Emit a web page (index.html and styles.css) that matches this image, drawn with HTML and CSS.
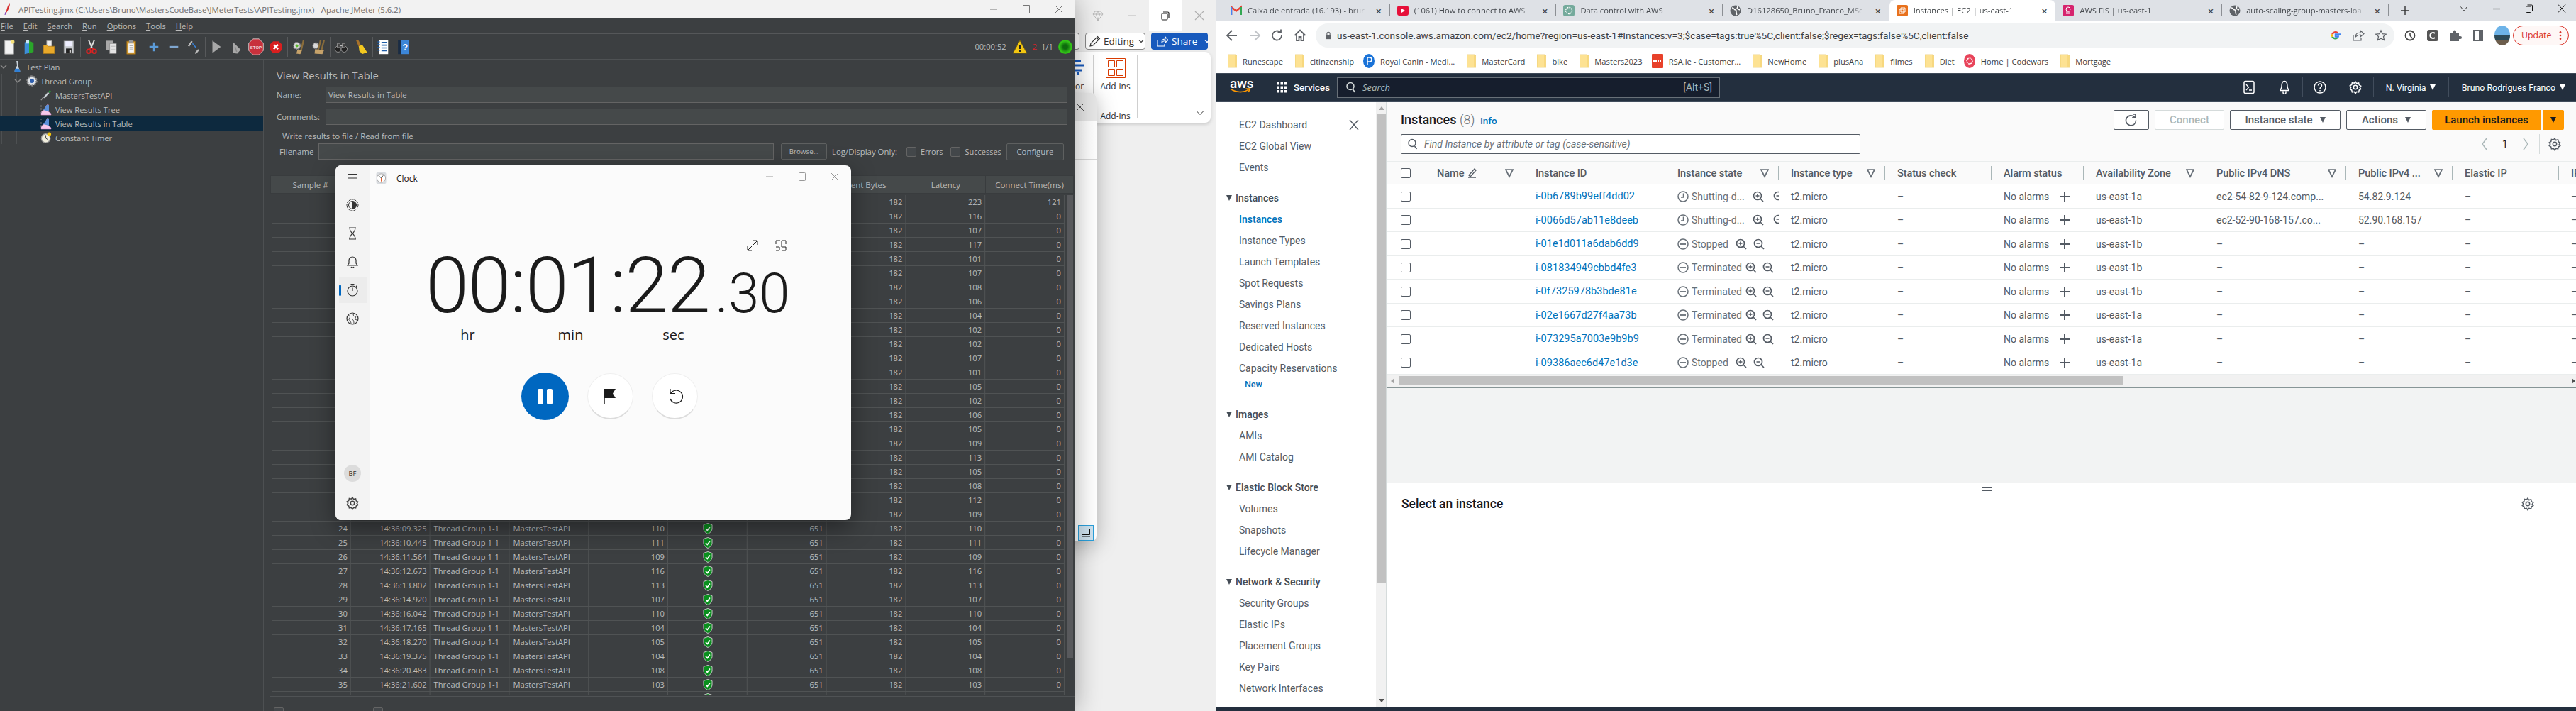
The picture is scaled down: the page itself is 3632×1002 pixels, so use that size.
FILE: index.html
```html
<!doctype html>
<html lang="en">
<head>
<meta charset="utf-8">
<title>Desktop</title>
<link rel="stylesheet" href="styles.css">
</head>
<body>
<svg class="sprite" xmlns="http://www.w3.org/2000/svg">
  <symbol id="shield" viewBox="0 0 14 16"><path d="M7 .5 13 2.500v6c0 3-3 5.500-6 7-3-1.500-6-4-6-7v-6z" fill="#0a8f1e" stroke="#c8c8c8"/><path d="m4 8 2.300 2.500L10 5.500" fill="none" stroke="#fff" stroke-width="1.600"/></symbol>
  <symbol id="folder" viewBox="0 0 13 20"><path d="M0 1h11l2 2v16H0z" fill="#fde293" stroke="#e8c766" stroke-width=".7"/><path d="M11 1v18" stroke="#f2cf6a"/></symbol>
  <symbol id="zin" viewBox="0 0 16 16"><circle cx="7" cy="7" r="5.500" fill="none" stroke="#545b64" stroke-width="1.700"/><path d="m11 11 4 4M4.500 7h5M7 4.500v5" stroke="#545b64" stroke-width="1.700" fill="none"/></symbol>
  <symbol id="zout" viewBox="0 0 16 16"><circle cx="7" cy="7" r="5.500" fill="none" stroke="#545b64" stroke-width="1.700"/><path d="m11 11 4 4M4.500 7h5" stroke="#545b64" stroke-width="1.700" fill="none"/></symbol>
  <symbol id="st-minus" viewBox="0 0 16 16"><circle cx="8" cy="8" r="7" fill="none" stroke="#687078" stroke-width="1.500"/><path d="M4 8h8" stroke="#687078" stroke-width="1.800"/></symbol>
  <symbol id="st-clock" viewBox="0 0 16 16"><circle cx="8" cy="8" r="7" fill="none" stroke="#687078" stroke-width="1.500"/><path d="M8.500 3.500V9H5" stroke="#687078" stroke-width="1.500" fill="none"/></symbol>
  <symbol id="filter" viewBox="0 0 12 14"><path d="M1 2h10L6 12z" fill="#fff" stroke="#687078" stroke-width="1.700"/></symbol>
  <symbol id="plus" viewBox="0 0 16 16"><path d="M8 1v14M1 8h14" stroke="#545b64" stroke-width="2"/></symbol>
  <symbol id="graph" viewBox="0 0 16 18"><path d="M1 17V13L6 9l3-6 2-1v10l4 3v2z" fill="#f8c8ea" stroke="#d68ccc" stroke-width=".5"/><path d="M4 10 9 3h3v9z" fill="#5a8fd8"/><path d="M1 1v16" stroke="#777" stroke-dasharray="1 1"/></symbol>
  <symbol id="gearo" viewBox="0 0 24 24"><circle cx="12" cy="12" r="3.200" fill="none" stroke="currentColor" stroke-width="1.800"/><path d="M12 2.500l2 3 3.500-.8.800 3.500 3 1.800-1.800 2.500 1.800 2.500-3 1.800-.8 3.500-3.500-.8-2 3-2-3-3.500.8-.8-3.500-3-1.800L4.500 12 2.700 9.500l3-1.800.8-3.500 3.500.8z" fill="none" stroke="currentColor" stroke-width="1.800"/></symbol>
</svg>

<main class="desktop">

  <section class="word">
    <div class="word-title">
      <span class="word-cell"><svg class="ic16" viewBox="0 0 16 16"><path d="M4 2h8l3 4-7 9-7-9zM1 6h14M5.500 6 8 15l2.500-9L8 2 5.500 6" fill="none" stroke="#b9b9b9"/></svg></span>
      <span class="word-cell"><svg class="ic16" viewBox="0 0 16 16"><path d="M2 8h12" stroke="#b9b9b9"/></svg></span>
      <span class="word-cell word-cell-on"><svg class="ic16" viewBox="0 0 16 16"><rect x="3" y="5" width="8" height="9" rx="1.500" fill="none" stroke="#222" stroke-width="1.200"/><path d="M5 3h6.500A1.500 1.500 0 0 1 13 4.500V11" fill="none" stroke="#222" stroke-width="1.200"/></svg></span>
      <span class="word-cell"><svg class="ic16" viewBox="0 0 16 16"><path d="m2 2 12 12M14 2 2 14" stroke="#b0b0b0" stroke-width="1.200"/></svg></span>
    </div>
    <div class="word-actions">
      <span class="word-sliver"></span>
      <span class="word-edit"><svg class="ic18" viewBox="0 0 18 18"><path d="M2 16l1-4L12.500 2.500l3 3L6 15zM11 4l3 3" fill="none" stroke="#333" stroke-width="1.100"/></svg>Editing<svg class="ic8" viewBox="0 0 8 8"><path d="m1 2.500 3 3 3-3" fill="none" stroke="#333" stroke-width="1.100"/></svg></span>
      <span class="word-share"><svg class="ic16" viewBox="0 0 16 16"><path d="M1 7v8h10v-3M7 10c0-4 2-5 5-5V2l4 4.500L12 10V7.500c-2 0-3.500.8-5 2.500" fill="none" stroke="#fff" stroke-width="1.100"/></svg>Share<svg class="ic8 word-share-chev" viewBox="0 0 8 8"><path d="m1 2.500 3 3 3-3" fill="none" stroke="#fff" stroke-width="1.300"/></svg></span>
    </div>
    <div class="ribbon">
      <div class="rib-col rib-col-a">
        <svg class="rib-blue" viewBox="0 0 12 24"><path d="M0 4h8M0 10h12M0 17h9M3 20l2 3" fill="none" stroke="#185abd" stroke-width="3"/></svg>
        <span class="rib-or">or</span>
      </div>
      <div class="rib-col rib-col-b">
        <svg class="rib-addin" viewBox="0 0 28 28"><path d="M.5.500h27v27H.5z" fill="none" stroke="#d83b01"/><path d="M3.500 3.500h9v9h-9zM15.500 3.500h9v9h-9zM3.500 15.500h9v9h-9zM15.500 15.500h9v9h-9z" fill="none" stroke="#d83b01"/></svg>
        <span class="rib-label">Add-ins</span>
        <span class="rib-group">Add-ins</span>
      </div>
      <div class="rib-end"><svg class="ic12" viewBox="0 0 12 12"><path d="m1 3.500 5 5 5-5" fill="none" stroke="#333"/></svg></div>
    </div>
  </section>

  <section class="subwin">
    <div class="subwin-title"><svg class="ic12" viewBox="0 0 12 12"><path d="m1 1 10 10M11 1 1 11" stroke="#555"/></svg></div>
    <div class="subwin-body"></div>
    <div class="subwin-grid"></div>
    <div class="subwin-tick"><svg class="ic12" viewBox="0 0 12 12"><path d="M.5.500h11v8H.5zM0 11h12" fill="none" stroke="#111"/></svg></div>
  </section>

  <section class="jmeter">
    <header class="jm-title">
      <svg class="jm-feather" viewBox="0 0 10 18"><path d="M8 0C5 3 4 7 3 11L2 13 3 14C6 10 8 5 8 0z" fill="#d62b2b"/><path d="M2 13 1 17" stroke="#7a2fb0"/></svg>
      <span class="jm-title-text">APITesting.jmx (C:\Users\Bruno\MastersCodeBase\JMeterTests\APITesting.jmx) - Apache JMeter (5.6.2)</span>
      <span class="jm-win"><svg class="ic12" viewBox="0 0 12 12"><path d="M1 6h10" stroke="#777"/></svg><svg class="ic12" viewBox="0 0 12 12"><path d="M1.500.5h9v11h-9z" fill="none" stroke="#777"/></svg><svg class="ic12" viewBox="0 0 12 12"><path d="m1 1 10 10M11 1 1 11" stroke="#777"/></svg></span>
    </header>
    <nav class="jm-menu">
      <span><u>F</u>ile</span><span><u>E</u>dit</span><span><u>S</u>earch</span><span><u>R</u>un</span><span><u>O</u>ptions</span><span><u>T</u>ools</span><span><u>H</u>elp</span>
    </nav>
    <div class="jm-tools">
      <svg class="tb" viewBox="0 0 24 28"><path d="M4 3h13l3 3v21H4z" fill="#f2f2f2" stroke="#aaa"/><circle cx="18" cy="5" r="3.500" fill="#f6e27a"/></svg>
      <svg class="tb" viewBox="0 0 24 28"><path d="M4 6 12 3v22l-8 2z" fill="#3d8fd8"/><path d="M12 3l8 4v16l-8 3z" fill="#2aa52a"/><path d="M6 2h6v6H6z" fill="#c9e4f5"/></svg>
      <svg class="tb" viewBox="0 0 24 28"><path d="M8 3h9v12H8z" fill="#eee" stroke="#999"/><path d="M2 11h7l2 2h11v13H2z" fill="#e8a92a" stroke="#a8761a"/></svg>
      <svg class="tb" viewBox="0 0 24 28"><path d="M3 3h18v23H3z" fill="#c8ccd0" stroke="#555"/><path d="M6 4h12v9H6z" fill="#eef"/><path d="M7 17h10v9H7z" fill="#222"/><path d="M13 19h3v5h-3z" fill="#ccc"/></svg>
      <i class="tb-sep"></i>
      <svg class="tb" viewBox="0 0 24 28"><path d="M7 2l6 14M17 2l-6 14" stroke="#ddd" stroke-width="2.500"/><circle cx="7" cy="22" r="3.500" fill="none" stroke="#d22" stroke-width="2.500"/><circle cx="17" cy="22" r="3.500" fill="none" stroke="#d22" stroke-width="2.500"/><path d="M11 16l-3 3M13 16l3 3" stroke="#d22" stroke-width="2"/></svg>
      <svg class="tb" viewBox="0 0 24 28"><path d="M3 3h12v17H3z" fill="#a8a8a8"/><path d="M9 8h12v18H9z" fill="#e4e4e4" stroke="#888"/><path d="M11 13h8M11 16h8M11 19h8" stroke="#aaa"/></svg>
      <svg class="tb" viewBox="0 0 24 28"><path d="M4 4h16v23H4z" fill="#d59b32" stroke="#8f6418"/><path d="M7 8h10v16H7z" fill="#f5f5f5"/><path d="M8 2h8v5H8z" fill="#999"/><path d="M9 12h6M9 15h6M9 18h6" stroke="#999"/></svg>
      <i class="tb-sep"></i>
      <svg class="tb" viewBox="0 0 24 28"><path d="M12 6v16M4 14h16" stroke="#5b9bd8" stroke-width="3"/></svg>
      <svg class="tb" viewBox="0 0 24 28"><path d="M4 14h16" stroke="#7fa6cf" stroke-width="3"/></svg>
      <svg class="tb" viewBox="0 0 24 28"><path d="M3 13 9 4M15 26l6-7" stroke="#bbb" stroke-width="3"/><path d="M10 8l6 7" stroke="#3a7fd0" stroke-width="2"/><path d="m14 15 3 1-1-3z" fill="#3a7fd0"/></svg>
      <i class="tb-sep"></i>
      <svg class="tb" viewBox="0 0 24 28"><path d="M5 3l15 11L5 25z" fill="#a8a8a8"/></svg>
      <svg class="tb" viewBox="0 0 24 28"><path d="M6 5l14 14-6 7-8-1z" fill="#a8a8a8"/><path d="M10 14l3 9" stroke="#8a8a8a" stroke-width="2"/></svg>
      <svg class="tb tb-stop" viewBox="0 0 26 28"><path d="M8 1h10l7 7v12l-7 7H8l-7-7V8z" fill="#c8313c" stroke="#d8d8d8"/><text x="13" y="17" class="tb-stop-t">STOP</text></svg>
      <svg class="tb" viewBox="0 0 24 28"><path d="M7 4h10l6 6v9l-6 6H7l-6-6v-9z" fill="#d91f1f"/><path d="m8 10 8 8M16 10l-8 8" stroke="#fff" stroke-width="3"/></svg>
      <i class="tb-sep"></i>
      <svg class="tb" viewBox="0 0 24 28"><circle cx="9" cy="12" r="6" fill="#d8d8d8" stroke="#888" stroke-dasharray="2 1" stroke-width="2"/><circle cx="9" cy="12" r="2.500" fill="#5cb82e"/><path d="M21 2 15 26" stroke="#8a6d3b" stroke-width="3"/><path d="M10 19l8 1-3 7-7-1z" fill="#c6a26a"/></svg>
      <svg class="tb" viewBox="0 0 24 28"><circle cx="7" cy="12" r="5" fill="#d8d8d8" stroke="#888" stroke-dasharray="2 1" stroke-width="2"/><path d="M16 2 10 26M22 2l-6 24" stroke="#8a6d3b" stroke-width="3"/><path d="M6 18l16 2-3 7-14-1z" fill="#c6a26a"/></svg>
      <i class="tb-sep"></i>
      <svg class="tb" viewBox="0 0 24 28"><circle cx="6.500" cy="18" r="5.500" fill="#222" stroke="#aaa"/><circle cx="17.500" cy="18" r="5.500" fill="#222" stroke="#aaa"/><path d="M5 8h5v7H5zM14 8h5v7h-5z" fill="#444" stroke="#999"/><path d="M10 12h4" stroke="#bbb" stroke-width="2"/></svg>
      <svg class="tb" viewBox="0 0 24 28"><path d="M3 2l5 1 4 9-4 2z" fill="#a8722a"/><path d="M8 13l6-3 9 14-9 3-5-6z" fill="#f2c81f"/></svg>
      <i class="tb-sep"></i>
      <svg class="tb" viewBox="0 0 24 28"><path d="M4 2h16v25H4z" fill="#fff"/><path d="M1 5h4M1 10h4M1 15h4M1 20h4M8 6h10M8 11h10M8 16h10M8 21h10" stroke="#1f5ea8" stroke-width="2"/></svg>
      <svg class="tb" viewBox="0 0 24 28"><path d="M2 2h7v25H2z" fill="#1a2c44"/><path d="M8 2h14v25H8z" fill="#3c86d8"/><text x="15" y="20" class="tb-q">?</text></svg>
      <span class="jm-stat">
        <span>00:00:52</span>
        <svg class="tb-warn" viewBox="0 0 22 20"><path d="M11 1 21 19H1z" fill="#f3c611" stroke="#6d5c12"/><path d="M11 7v6M11 15v2" stroke="#222" stroke-width="2"/></svg>
        <span class="jm-red">2</span>
        <span>1/1</span>
        <span class="jm-orb"></span>
      </span>
    </div>
    <div class="jm-body">
      <aside class="jm-tree">
        <div class="tr tr-0"><svg class="tw" viewBox="0 0 10 10"><path d="m1 3 4 4 4-4" fill="none" stroke="#888" stroke-width="1.500"/></svg><svg class="ti" viewBox="0 0 14 20"><path d="M5.500 1h2v7l4 9c0 1.500-9 1.500-9 0l4-9z" fill="#cfd8e0"/><path d="M3.500 13h6l2 4c0 1.500-9 1.500-9 0z" fill="#2f7fd6"/></svg>Test Plan</div>
        <div class="tr tr-1"><svg class="tw" viewBox="0 0 10 10"><path d="m1 3 4 4 4-4" fill="none" stroke="#888" stroke-width="1.500"/></svg><svg class="ti ti-w" viewBox="0 0 18 18"><circle cx="9" cy="9" r="6.500" fill="#dfe3e8" stroke="#888" stroke-width="2.500" stroke-dasharray="2.500 1.500"/><circle cx="9" cy="9" r="3" fill="#2f5fae"/></svg>Thread Group</div>
        <div class="tr tr-2"><svg class="ti" viewBox="0 0 18 18"><path d="M15 1l2 2-3 3-2-2z" fill="#2b8a3e"/><path d="M12 4l2 2-7 8-3-1z" fill="#cfd6dc" stroke="#555" stroke-width=".6"/><path d="M4 13 1 17" stroke="#999" stroke-width="1.500"/></svg>MastersTestAPI</div>
        <div class="tr tr-2"><svg class="ti" viewBox="0 0 16 18"><use href="#graph"/></svg>View Results Tree</div>
        <div class="tr tr-2 tr-on"><svg class="ti" viewBox="0 0 16 18"><use href="#graph"/></svg>View Results in Table</div>
        <div class="tr tr-2"><svg class="ti" viewBox="0 0 18 18"><circle cx="8.500" cy="10" r="7" fill="#f1efdd" stroke="#999" stroke-width="1.500"/><path d="M8.500 10V5M8.500 10l3 2" stroke="#333"/><circle cx="14" cy="3.500" r="3" fill="#f1c40f"/></svg>Constant Timer</div>
      </aside>
      <div class="jm-panel">
        <form class="jm-form">
          <h2 class="jm-h">View Results in Table</h2>
          <div class="jm-field"><label class="jm-lab">Name:</label><span class="jm-input">View Results in Table</span></div>
          <div class="jm-field jm-field-c"><label class="jm-lab">Comments:</label><span class="jm-input"></span></div>
          <div class="jm-legend"><span>Write results to file / Read from file</span></div>
          <div class="jm-file">
            <label class="jm-flab">Filename</label>
            <span class="jm-input jm-input-f"></span>
            <span class="jm-btn jm-btn-s">Browse...</span>
            <span class="jm-ld">Log/Display Only:</span>
            <span class="jm-chk"></span><span class="jm-cl">Errors</span>
            <span class="jm-chk"></span><span class="jm-cl">Successes</span>
            <span class="jm-btn jm-btn-c">Configure</span>
          </div>
        </form>
        <div class="jt-head"><span>Sample #</span><span>Start Time</span><span>Thread Name</span><span>Sample Label</span><span>Sample Time(ms)</span><span>Status</span><span>Bytes</span><span>Sent Bytes</span><span>Latency</span><span>Connect Time(ms)</span></div>
        <div class="jt-wrap">
          <div class="jt-rows">
            <div class="jr"><b class="c8">182</b><b>223</b><b>121</b></div>
            <div class="jr"><b class="c8">182</b><b>116</b><b>0</b></div>
            <div class="jr"><b class="c8">182</b><b>107</b><b>0</b></div>
            <div class="jr"><b class="c8">182</b><b>117</b><b>0</b></div>
            <div class="jr"><b class="c8">182</b><b>101</b><b>0</b></div>
            <div class="jr"><b class="c8">182</b><b>107</b><b>0</b></div>
            <div class="jr"><b class="c8">182</b><b>108</b><b>0</b></div>
            <div class="jr"><b class="c8">182</b><b>106</b><b>0</b></div>
            <div class="jr"><b class="c8">182</b><b>104</b><b>0</b></div>
            <div class="jr"><b class="c8">182</b><b>102</b><b>0</b></div>
            <div class="jr"><b class="c8">182</b><b>102</b><b>0</b></div>
            <div class="jr"><b class="c8">182</b><b>107</b><b>0</b></div>
            <div class="jr"><b class="c8">182</b><b>101</b><b>0</b></div>
            <div class="jr"><b class="c8">182</b><b>105</b><b>0</b></div>
            <div class="jr"><b class="c8">182</b><b>102</b><b>0</b></div>
            <div class="jr"><b class="c8">182</b><b>106</b><b>0</b></div>
            <div class="jr"><b class="c8">182</b><b>105</b><b>0</b></div>
            <div class="jr"><b class="c8">182</b><b>109</b><b>0</b></div>
            <div class="jr"><b class="c8">182</b><b>113</b><b>0</b></div>
            <div class="jr"><b class="c8">182</b><b>105</b><b>0</b></div>
            <div class="jr"><b class="c8">182</b><b>108</b><b>0</b></div>
            <div class="jr"><b class="c8">182</b><b>112</b><b>0</b></div>
            <div class="jr"><b class="c8">182</b><b>109</b><b>0</b></div>
            <div class="jr"><b>24</b><b>14:36:09.325</b><em>Thread Group 1-1</em><em>MastersTestAPI</em><b>110</b><s><svg class="sh"><use href="#shield"/></svg></s><b>651</b><b>182</b><b>110</b><b>0</b></div>
            <div class="jr"><b>25</b><b>14:36:10.445</b><em>Thread Group 1-1</em><em>MastersTestAPI</em><b>111</b><s><svg class="sh"><use href="#shield"/></svg></s><b>651</b><b>182</b><b>111</b><b>0</b></div>
            <div class="jr"><b>26</b><b>14:36:11.564</b><em>Thread Group 1-1</em><em>MastersTestAPI</em><b>109</b><s><svg class="sh"><use href="#shield"/></svg></s><b>651</b><b>182</b><b>109</b><b>0</b></div>
            <div class="jr"><b>27</b><b>14:36:12.673</b><em>Thread Group 1-1</em><em>MastersTestAPI</em><b>116</b><s><svg class="sh"><use href="#shield"/></svg></s><b>651</b><b>182</b><b>116</b><b>0</b></div>
            <div class="jr"><b>28</b><b>14:36:13.802</b><em>Thread Group 1-1</em><em>MastersTestAPI</em><b>113</b><s><svg class="sh"><use href="#shield"/></svg></s><b>651</b><b>182</b><b>113</b><b>0</b></div>
            <div class="jr"><b>29</b><b>14:36:14.920</b><em>Thread Group 1-1</em><em>MastersTestAPI</em><b>107</b><s><svg class="sh"><use href="#shield"/></svg></s><b>651</b><b>182</b><b>107</b><b>0</b></div>
            <div class="jr"><b>30</b><b>14:36:16.042</b><em>Thread Group 1-1</em><em>MastersTestAPI</em><b>110</b><s><svg class="sh"><use href="#shield"/></svg></s><b>651</b><b>182</b><b>110</b><b>0</b></div>
            <div class="jr"><b>31</b><b>14:36:17.165</b><em>Thread Group 1-1</em><em>MastersTestAPI</em><b>104</b><s><svg class="sh"><use href="#shield"/></svg></s><b>651</b><b>182</b><b>104</b><b>0</b></div>
            <div class="jr"><b>32</b><b>14:36:18.270</b><em>Thread Group 1-1</em><em>MastersTestAPI</em><b>105</b><s><svg class="sh"><use href="#shield"/></svg></s><b>651</b><b>182</b><b>105</b><b>0</b></div>
            <div class="jr"><b>33</b><b>14:36:19.375</b><em>Thread Group 1-1</em><em>MastersTestAPI</em><b>104</b><s><svg class="sh"><use href="#shield"/></svg></s><b>651</b><b>182</b><b>104</b><b>0</b></div>
            <div class="jr"><b>34</b><b>14:36:20.483</b><em>Thread Group 1-1</em><em>MastersTestAPI</em><b>108</b><s><svg class="sh"><use href="#shield"/></svg></s><b>651</b><b>182</b><b>108</b><b>0</b></div>
            <div class="jr"><b>35</b><b>14:36:21.602</b><em>Thread Group 1-1</em><em>MastersTestAPI</em><b>103</b><s><svg class="sh"><use href="#shield"/></svg></s><b>651</b><b>182</b><b>103</b><b>0</b></div>
            <div class="jr"><s class="c6"><svg class="sh"><use href="#shield"/></svg></s></div>
          </div>
          <div class="jt-scroll"></div>
        </div>
        <div class="jm-foot">
          <span class="jm-chk"></span><span class="jf-a">Scroll automatically?</span>
          <span class="jm-chk"></span><span class="jf-b">Child samples?</span>
          <span class="jf-c">No of Samples <b>30</b></span>
          <span class="jf-d">Latest Sample <b>107</b></span>
          <span class="jf-e">Average <b>110</b></span>
          <span class="jf-f">Deviation <b>40</b></span>
        </div>
      </div>
    </div>
  </section>

  <section class="clock">
    <aside class="ck-side">
      <span class="ck-nav ck-nav-first"><svg class="ic20" viewBox="0 0 20 20"><path d="M3 4.500h14M3 10h14M3 15.500h14" stroke="#333" stroke-width="1.200"/></svg></span>
      <span class="ck-nav"><svg class="ic20" viewBox="0 0 20 20"><circle cx="10" cy="10" r="8" fill="none" stroke="#333" stroke-dasharray="3 1"/><circle cx="10" cy="10" r="5.500" fill="none" stroke="#333"/><path d="M10 4.500a5.500 5.500 0 0 1 0 11z" fill="#333"/></svg></span>
      <span class="ck-nav"><svg class="ic20" viewBox="0 0 20 20"><path d="M5 2h10M5 18h10M6 2c0 5 3 6 3.500 8C9 12 6 13 6 18M14 2c0 5-3 6-3.500 8 .5 2 3.500 3 3.500 8" fill="none" stroke="#333" stroke-width="1.200"/></svg></span>
      <span class="ck-nav"><svg class="ic20" viewBox="0 0 20 20"><path d="M3 15h14l-2-3V8A5 5 0 0 0 5 8v4zM8 17c.5 1.500 3.500 1.500 4 0" fill="none" stroke="#333" stroke-width="1.200"/></svg></span>
      <span class="ck-nav ck-nav-on"><svg class="ic20" viewBox="0 0 20 20"><circle cx="10" cy="11" r="7" fill="none" stroke="#333" stroke-width="1.200"/><path d="M7.500 1.500h5M10 11V6.500M15 5l1.500-1.500" stroke="#333" stroke-width="1.200"/></svg></span>
      <span class="ck-nav"><svg class="ic20" viewBox="0 0 20 20"><circle cx="10" cy="10" r="8" fill="none" stroke="#333" stroke-width="1.200"/><path d="M4 5c3 1 3 4 1 5s3 3 3 7M12 2c-2 3 0 5 2 5s-1 3 0 4 2 1 3 0M9 11c2 0 3 2 3 6" fill="none" stroke="#333"/></svg></span>
      <span class="ck-user">BF</span>
      <span class="ck-gear"><svg class="ic20" viewBox="0 0 24 24"><use href="#gearo"/></svg></span>
    </aside>
    <div class="ck-main">
      <div class="ck-title">
        <svg class="ck-logo" viewBox="0 0 16 18"><rect x=".5" y=".5" width="15" height="17" rx="2" fill="#d9dce0"/><circle cx="8" cy="9" r="6.500" fill="#fff" stroke="#aaa"/><path d="M8 9 4 5M8 9l3-4" stroke="#444"/><path d="M8 9v5" stroke="#e2531d"/></svg>
        <span class="ck-name">Clock</span>
        <span class="ck-win">
          <span><svg class="ic12" viewBox="0 0 12 12"><path d="M1 6h10" stroke="#999"/></svg></span>
          <span><svg class="ic12" viewBox="0 0 12 12"><rect x="1.500" y=".5" width="9" height="11" rx="1" fill="none" stroke="#999"/></svg></span>
          <span><svg class="ic12" viewBox="0 0 12 12"><path d="m1 1 10 10M11 1 1 11" stroke="#999"/></svg></span>
        </span>
      </div>
      <div class="ck-expand">
        <svg class="ic20" viewBox="0 0 20 20"><path d="M3 17 17 3M11 3h6v6M3 11v6h6" fill="none" stroke="#222"/></svg>
        <svg class="ic20" viewBox="0 0 20 20"><path d="M3 8V3h6M17 8V3H11v9h6v5h-6M3 17h5v-5H3" fill="none" stroke="#222"/></svg>
      </div>
      <div class="ck-time">00:01:22<span class="ck-frac">.30</span></div>
      <div class="ck-units"><span>hr</span><span>min</span><span>sec</span></div>
      <div class="ck-btns">
        <span class="ck-pause"><i></i><i></i></span>
        <span class="ck-round"><svg class="ic24" viewBox="0 0 24 24"><path d="M3 2v21" stroke="#1b1b1b" stroke-width="1.500"/><path d="M3 2h16l-4 6.500L19 15H3z" fill="#1b1b1b"/></svg></span>
        <span class="ck-round ck-round-2"><svg class="ic24" viewBox="0 0 24 24"><path d="M6 8a9 9 0 1 1-1 8M5 2v6.500h7" fill="none" stroke="#1b1b1b" stroke-width="1.200"/></svg></span>
      </div>
    </div>
  </section>

  <section class="browser">
    <div class="ch-tabs">
      <div class="tab"><svg class="fav" viewBox="0 0 16 16"><path d="M1 14V3l7 5.500L15 3v11" fill="none" stroke="#ea4335" stroke-width="2.500"/><path d="M1 14V3" stroke="#4285f4" stroke-width="2.500"/><path d="M15 14V3" stroke="#34a853" stroke-width="2.500"/></svg><span class="tab-t">Caixa de entrada (16.193) - brur</span><span class="tab-x">×</span></div>
      <div class="tab"><svg class="fav" viewBox="0 0 16 16"><rect y="1" width="16" height="14" rx="3" fill="#e6103a"/><path d="m6 5 5 3-5 3z" fill="#fff"/></svg><span class="tab-t">(1061) How to connect to AWS</span><span class="tab-x">×</span></div>
      <div class="tab"><svg class="fav" viewBox="0 0 16 16"><rect width="16" height="16" rx="3" fill="#74aa9c"/><circle cx="8" cy="8" r="4.500" fill="none" stroke="#fff" stroke-dasharray="2 1" stroke-width="1.500"/></svg><span class="tab-t">Data control with AWS</span><span class="tab-x">×</span></div>
      <div class="tab"><svg class="fav" viewBox="0 0 16 16"><circle cx="8" cy="8" r="7.500" fill="#5f6368"/><path d="M3 4c3 0 3 3 5 3s0 4 2 7M11 2l-1 3 4 2" fill="none" stroke="#fff" stroke-width="1.500"/></svg><span class="tab-t">D16128650_Bruno_Franco_MSc</span><span class="tab-x">×</span></div>
      <div class="tab tab-on"><svg class="fav" viewBox="0 0 16 16"><rect width="16" height="16" rx="2" fill="#e8711d"/><path d="M6 4h6v6H6zM4 6h6v6H4z" fill="none" stroke="#fff"/></svg><span class="tab-t">Instances | EC2 | us-east-1</span><span class="tab-x">×</span></div>
      <div class="tab"><svg class="fav" viewBox="0 0 16 16"><rect width="16" height="16" rx="2" fill="#d6246e"/><circle cx="8" cy="6" r="3" fill="none" stroke="#fff"/><path d="M6 9v4M10 9v4M8 9v4" stroke="#fff"/></svg><span class="tab-t">AWS FIS | us-east-1</span><span class="tab-x">×</span></div>
      <div class="tab"><svg class="fav" viewBox="0 0 16 16"><circle cx="8" cy="8" r="7.500" fill="#5f6368"/><path d="M3 4c3 0 3 3 5 3s0 4 2 7M11 2l-1 3 4 2" fill="none" stroke="#fff" stroke-width="1.500"/></svg><span class="tab-t">auto-scaling-group-masters-loa</span><span class="tab-x">×</span></div>
      <span class="tab-new"><svg class="ic14" viewBox="0 0 14 14"><path d="M7 1v12M1 7h12" stroke="#333" stroke-width="1.400"/></svg></span>
      <span class="ch-win">
        <svg class="ic12" viewBox="0 0 12 12"><path d="m1.500 3.500 4.500 6 4.500-6" fill="none" stroke="#333"/></svg>
        <svg class="ic12" viewBox="0 0 12 12"><path d="M1 6.500h10" stroke="#111" stroke-width="1.200"/></svg>
        <svg class="ic12" viewBox="0 0 12 12"><rect x="1.500" y="3" width="7" height="8.500" rx="1" fill="none" stroke="#111"/><path d="M3.500 1h6a1 1 0 0 1 1 1v7" fill="none" stroke="#111"/></svg>
        <svg class="ic12" viewBox="0 0 12 12"><path d="m1 .5 10 11M11 .5 1 11.500" stroke="#111"/></svg>
      </span>
    </div>
    <div class="ch-bar">
      <svg class="ic20" viewBox="0 0 20 20"><path d="M17 10H4M10 3l-7 7 7 7" fill="none" stroke="#5f6368" stroke-width="1.800"/></svg>
      <svg class="ic20 ch-dim" viewBox="0 0 20 20"><path d="M3 10h13M10 3l7 7-7 7" fill="none" stroke="#c0c3c7" stroke-width="1.800"/></svg>
      <svg class="ic20" viewBox="0 0 20 20"><path d="M16 10a6.500 6.500 0 1 1-2-4.700M15 1.500V6h-4.500" fill="none" stroke="#5f6368" stroke-width="1.800"/></svg>
      <svg class="ic20" viewBox="0 0 20 20"><path d="M2.500 10 10 2.500l7.500 7.500M5 8v9h3.500v-5h3v5H15V8" fill="none" stroke="#5f6368" stroke-width="1.800"/></svg>
      <div class="ch-omni">
        <svg class="ic12" viewBox="0 0 12 14"><path d="M2 6h8v7H2z" fill="#5f6368"/><path d="M3.500 6V4a2.500 2.500 0 0 1 5 0v2" fill="none" stroke="#5f6368" stroke-width="1.300"/></svg>
        <span class="ch-url">us-east-1.console.aws.amazon.com/ec2/home?region=us-east-1#Instances:v=3;$case=tags:true%5C,client:false;$regex=tags:false%5C,client:false</span>
        <span class="ch-omni-r">
          <svg class="ic18" viewBox="0 0 18 18"><path d="M15.500 9c0-.5 0-1-.1-1.500H9v3h3.700a3.200 3.200 0 0 1-1.400 2" fill="none" stroke="#4285f4" stroke-width="2.400"/><path d="M11.300 12.500A5 5 0 0 1 4.300 10.700" fill="none" stroke="#34a853" stroke-width="2.400"/><path d="M4.300 10.700a5 5 0 0 1 0-3.400" fill="none" stroke="#fbbc05" stroke-width="2.400"/><path d="M4.300 7.300a5 5 0 0 1 7.500-2" fill="none" stroke="#ea4335" stroke-width="2.400"/></svg>
          <svg class="ic18" viewBox="0 0 18 18"><path d="M2 9v7h11v-3M5 11c0-4 3-6 7-6V2l5 4.500L12 11V8c-3 0-5 1-7 3z" fill="none" stroke="#5f6368" stroke-width="1.200"/></svg>
          <svg class="ic18" viewBox="0 0 18 18"><path d="m9 2 2.200 4.600 5 .6-3.700 3.400 1 5L9 13.200 4.500 15.600l1-5L1.800 7.200l5-.6z" fill="none" stroke="#5f6368" stroke-width="1.300"/></svg>
        </span>
      </div>
      <span class="ch-exts">
        <svg class="ic18" viewBox="0 0 18 18"><circle cx="9" cy="9" r="6.500" fill="none" stroke="#444" stroke-width="1.800"/><path d="M9 5v4l3 4" stroke="#444" stroke-width="1.600" fill="none"/></svg>
        <svg class="ic18" viewBox="0 0 18 18"><rect x="1" y="1" width="16" height="16" rx="3" fill="#555"/><path d="M12 6a4 4 0 1 0 0 6" fill="none" stroke="#fff" stroke-width="2"/></svg>
        <svg class="ic18" viewBox="0 0 18 18"><path d="M2 6h4V3.500a2 2 0 0 1 4 0V6h4v4h2a2 2 0 0 1 0 4h-2v3H2z" fill="#5f6368"/></svg>
        <svg class="ic18" viewBox="0 0 18 18"><path d="M3 2h12v14H3z" fill="none" stroke="#5f6368" stroke-width="2"/><path d="M10 2h5v14h-5z" fill="#5f6368"/></svg>
        <span class="ch-avatar"></span>
        <span class="ch-update">Update<svg class="ch-dots" viewBox="0 0 4 18"><circle cx="2" cy="3" r="1.700"/><circle cx="2" cy="9" r="1.700"/><circle cx="2" cy="15" r="1.700"/></svg></span>
      </span>
    </div>
    <div class="ch-book">
      <a class="bk"><svg class="bk-f"><use href="#folder"/></svg>Runescape</a>
      <a class="bk"><svg class="bk-f"><use href="#folder"/></svg>citinzenship</a>
      <a class="bk"><svg class="bk-i" viewBox="0 0 16 20"><ellipse cx="8" cy="10" rx="8" ry="10" fill="#1a73d8"/><path d="M6 5v11M6 5h3a3 3 0 0 1 0 6H6" fill="none" stroke="#fff" stroke-width="1.500"/></svg>Royal Canin - Medi...</a>
      <a class="bk"><svg class="bk-f"><use href="#folder"/></svg>MasterCard</a>
      <a class="bk"><svg class="bk-f"><use href="#folder"/></svg>bike</a>
      <a class="bk"><svg class="bk-f"><use href="#folder"/></svg>Masters2023</a>
      <a class="bk"><svg class="bk-i" viewBox="0 0 16 20"><rect width="16" height="20" rx="1" fill="#e8412a"/><path d="M2 10h12" stroke="#fff" stroke-width="3" stroke-dasharray="2 1"/></svg>RSA.ie - Customer...</a>
      <a class="bk"><svg class="bk-f"><use href="#folder"/></svg>NewHome</a>
      <a class="bk"><svg class="bk-f"><use href="#folder"/></svg>plusAna</a>
      <a class="bk"><svg class="bk-f"><use href="#folder"/></svg>filmes</a>
      <a class="bk"><svg class="bk-f"><use href="#folder"/></svg>Diet</a>
      <a class="bk"><svg class="bk-i" viewBox="0 0 16 20"><ellipse cx="8" cy="10" rx="8" ry="10" fill="#e8445a"/><circle cx="8" cy="10" r="4" fill="none" stroke="#fff" stroke-width="1.500" stroke-dasharray="2 1"/></svg>Home | Codewars</a>
      <a class="bk"><svg class="bk-f"><use href="#folder"/></svg>Mortgage</a>
    </div>
    <div class="aws-nav">
      <span class="aws-logo">aws<svg class="aws-smile" viewBox="0 0 32 8"><path d="M1 1c8 6 20 6 27 1M24 1h6l-2 5" fill="none" stroke="#ff9900" stroke-width="1.800"/></svg></span>
      <svg class="aws-grid" viewBox="0 0 15 15"><path d="M0 0h3.500v3.500H0zM5.500 0H9v3.500H5.500zM11 0h3.500v3.500H11zM0 5.500h3.500V9H0zM5.500 5.500H9V9H5.500zM11 5.500h3.500V9H11zM0 11h3.500v3.500H0zM5.500 11H9v3.500H5.500zM11 11h3.500v3.500H11z" fill="#fff"/></svg>
      <span class="aws-services">Services</span>
      <div class="aws-search">
        <svg class="ic16" viewBox="0 0 16 16"><circle cx="7" cy="6.500" r="5" fill="none" stroke="#d5dbdb" stroke-width="1.500"/><path d="m10.500 11 3 4" stroke="#d5dbdb" stroke-width="1.500"/></svg>
        <span class="aws-ph">Search</span>
        <span class="aws-key">[Alt+S]</span>
      </div>
      <span class="aws-right">
        <span class="aws-ic"><svg class="ic20" viewBox="0 0 20 20"><rect x="3" y="1.500" width="14" height="17" rx="2" fill="none" stroke="#fff" stroke-width="1.500"/><path d="m6 6 3.500 4L6 14M10 14h4" fill="none" stroke="#fff" stroke-width="1.300"/></svg></span>
        <span class="aws-ic"><svg class="ic20" viewBox="0 0 20 20"><path d="M10 1.500c-3 0-4 4-4 7 0 3-2 5-2 6h12c0-1-2-3-2-6 0-3-1-7-4-7zM8 15.500v2a2 2 0 0 0 4 0v-2" fill="none" stroke="#fff" stroke-width="1.500"/></svg></span>
        <span class="aws-ic"><svg class="ic20" viewBox="0 0 20 20"><circle cx="10" cy="10" r="8" fill="none" stroke="#fff" stroke-width="1.500"/><path d="M7.500 7.500c0-3.500 5-3.500 5 0 0 2-2.500 2-2.500 4.500M10 14v1.500" fill="none" stroke="#fff" stroke-width="1.500"/></svg></span>
        <span class="aws-ic"><svg class="ic20 aws-wh" viewBox="0 0 24 24"><use href="#gearo"/></svg></span>
        <span class="aws-reg">N. Virginia <i class="tri"></i></span>
        <span class="aws-user">Bruno Rodrigues Franco <i class="tri"></i></span>
      </span>
    </div>
    <div class="aws-body">
      <aside class="ec2-side">
        <div class="ec2-links">
          <a class="sn sn-top">EC2 Dashboard<svg class="ic16" viewBox="0 0 16 16"><path d="m2 1 12 14M14 1 2 15" stroke="#545b64" stroke-width="1.300"/></svg></a>
          <a class="sn">EC2 Global View</a>
          <a class="sn">Events</a>
          <div class="sh-h"><i class="tri tri-d"></i>Instances</div>
          <a class="sn sn-on">Instances</a>
          <a class="sn">Instance Types</a>
          <a class="sn">Launch Templates</a>
          <a class="sn">Spot Requests</a>
          <a class="sn">Savings Plans</a>
          <a class="sn">Reserved Instances</a>
          <a class="sn">Dedicated Hosts</a>
          <a class="sn">Capacity Reservations</a>
          <span class="sn-new">New</span>
          <div class="sh-h sh-h-img"><i class="tri tri-d"></i>Images</div>
          <a class="sn">AMIs</a>
          <a class="sn">AMI Catalog</a>
          <div class="sh-h"><i class="tri tri-d"></i>Elastic Block Store</div>
          <a class="sn">Volumes</a>
          <a class="sn">Snapshots</a>
          <a class="sn">Lifecycle Manager</a>
          <div class="sh-h"><i class="tri tri-d"></i>Network &amp; Security</div>
          <a class="sn">Security Groups</a>
          <a class="sn">Elastic IPs</a>
          <a class="sn">Placement Groups</a>
          <a class="sn">Key Pairs</a>
          <a class="sn">Network Interfaces</a>
        </div>
        <div class="ec2-vs"><i class="vs-up"></i><span class="vs-thumb"></span><i class="vs-down"></i></div>
      </aside>
      <div class="ec2-main">
        <div class="ec2-top">
          <h1 class="ec2-h">Instances <span class="ec2-count">(8)</span> <a class="ec2-info">Info</a></h1>
          <span class="ec2-actions">
            <span class="ab ab-r"><svg class="ic18" viewBox="0 0 18 18"><path d="M14 5.500a7 7 0 1 0 1.500 4M12 1h3v5h-5" fill="none" stroke="#545b64" stroke-width="1.600"/></svg></span>
            <span class="ab ab-off">Connect</span>
            <span class="ab ab-is">Instance state <i class="tri"></i></span>
            <span class="ab ab-ac">Actions <i class="tri"></i></span>
            <span class="ab-launch">Launch instances</span>
            <span class="ab-drop"><i class="tri"></i></span>
          </span>
        </div>
        <div class="ec2-find">
          <div class="find-box"><svg class="ic16" viewBox="0 0 16 16"><circle cx="7" cy="6.500" r="5" fill="none" stroke="#545b64" stroke-width="1.500"/><path d="m10.500 11 3 4" stroke="#545b64" stroke-width="1.500"/></svg><span>Find Instance by attribute or tag (case-sensitive)</span></div>
          <span class="pager">
            <svg class="pg" viewBox="0 0 10 18"><path d="M8 1 2 9l6 8" fill="none" stroke="#aab7b8" stroke-width="1.500"/></svg>
            <span class="pg-n">1</span>
            <svg class="pg" viewBox="0 0 10 18"><path d="m2 1 6 8-6 8" fill="none" stroke="#aab7b8" stroke-width="1.500"/></svg>
            <i class="pg-sep"></i>
            <svg class="ic20 pg-gear" viewBox="0 0 24 24"><use href="#gearo"/></svg>
          </span>
        </div>
        <div class="it-clip">
          <div class="it-row it-head">
            <span><i class="cb"></i></span>
            <span>Name <svg class="ic14" viewBox="0 0 14 14"><path d="M3 10 11 1l2 2-8 9zM2 13h11" fill="none" stroke="#545b64" stroke-width="1.300"/></svg><svg class="flt"><use href="#filter"/></svg></span>
            <span>Instance ID</span>
            <span>Instance state<svg class="flt"><use href="#filter"/></svg></span>
            <span>Instance type<svg class="flt"><use href="#filter"/></svg></span>
            <span>Status check</span>
            <span>Alarm status</span>
            <span>Availability Zone<svg class="flt"><use href="#filter"/></svg></span>
            <span>Public IPv4 DNS<svg class="flt"><use href="#filter"/></svg></span>
            <span>Public IPv4 ...<svg class="flt"><use href="#filter"/></svg></span>
            <span>Elastic IP</span>
            <span>IPv6</span>
          </div>
          <div class="it-row">
            <span><i class="cb"></i></span><span></span><a>i-0b6789b99eff4dd02</a>
            <span class="state"><svg class="st"><use href="#st-clock"/></svg><em>Shutting-d...</em><svg class="zi zi-s"><use href="#zin"/></svg><svg class="zi zo-s"><use href="#zout"/></svg></span>
            <span>t2.micro</span><span>–</span><span>No alarms<svg class="pl"><use href="#plus"/></svg></span><span>us-east-1a</span><span>ec2-54-82-9-124.comp...</span><span>54.82.9.124</span><span>–</span><span>–</span>
          </div>
          <div class="it-row">
            <span><i class="cb"></i></span><span></span><a>i-0066d57ab11e8deeb</a>
            <span class="state"><svg class="st"><use href="#st-clock"/></svg><em>Shutting-d...</em><svg class="zi zi-s"><use href="#zin"/></svg><svg class="zi zo-s"><use href="#zout"/></svg></span>
            <span>t2.micro</span><span>–</span><span>No alarms<svg class="pl"><use href="#plus"/></svg></span><span>us-east-1b</span><span>ec2-52-90-168-157.co...</span><span>52.90.168.157</span><span>–</span><span>–</span>
          </div>
          <div class="it-row">
            <span><i class="cb"></i></span><span></span><a>i-01e1d011a6dab6dd9</a>
            <span class="state"><svg class="st"><use href="#st-minus"/></svg><em>Stopped</em><svg class="zi zi-p"><use href="#zin"/></svg><svg class="zi zo-p"><use href="#zout"/></svg></span>
            <span>t2.micro</span><span>–</span><span>No alarms<svg class="pl"><use href="#plus"/></svg></span><span>us-east-1b</span><span>–</span><span>–</span><span>–</span><span>–</span>
          </div>
          <div class="it-row">
            <span><i class="cb"></i></span><span></span><a>i-081834949cbbd4fe3</a>
            <span class="state"><svg class="st"><use href="#st-minus"/></svg><em>Terminated</em><svg class="zi zi-t"><use href="#zin"/></svg><svg class="zi zo-t"><use href="#zout"/></svg></span>
            <span>t2.micro</span><span>–</span><span>No alarms<svg class="pl"><use href="#plus"/></svg></span><span>us-east-1b</span><span>–</span><span>–</span><span>–</span><span>–</span>
          </div>
          <div class="it-row">
            <span><i class="cb"></i></span><span></span><a>i-0f7325978b3bde81e</a>
            <span class="state"><svg class="st"><use href="#st-minus"/></svg><em>Terminated</em><svg class="zi zi-t"><use href="#zin"/></svg><svg class="zi zo-t"><use href="#zout"/></svg></span>
            <span>t2.micro</span><span>–</span><span>No alarms<svg class="pl"><use href="#plus"/></svg></span><span>us-east-1b</span><span>–</span><span>–</span><span>–</span><span>–</span>
          </div>
          <div class="it-row">
            <span><i class="cb"></i></span><span></span><a>i-02e1667d27f4aa73b</a>
            <span class="state"><svg class="st"><use href="#st-minus"/></svg><em>Terminated</em><svg class="zi zi-t"><use href="#zin"/></svg><svg class="zi zo-t"><use href="#zout"/></svg></span>
            <span>t2.micro</span><span>–</span><span>No alarms<svg class="pl"><use href="#plus"/></svg></span><span>us-east-1a</span><span>–</span><span>–</span><span>–</span><span>–</span>
          </div>
          <div class="it-row">
            <span><i class="cb"></i></span><span></span><a>i-073295a7003e9b9b9</a>
            <span class="state"><svg class="st"><use href="#st-minus"/></svg><em>Terminated</em><svg class="zi zi-t"><use href="#zin"/></svg><svg class="zi zo-t"><use href="#zout"/></svg></span>
            <span>t2.micro</span><span>–</span><span>No alarms<svg class="pl"><use href="#plus"/></svg></span><span>us-east-1a</span><span>–</span><span>–</span><span>–</span><span>–</span>
          </div>
          <div class="it-row">
            <span><i class="cb"></i></span><span></span><a>i-09386aec6d47e1d3e</a>
            <span class="state"><svg class="st"><use href="#st-minus"/></svg><em>Stopped</em><svg class="zi zi-p"><use href="#zin"/></svg><svg class="zi zo-p"><use href="#zout"/></svg></span>
            <span>t2.micro</span><span>–</span><span>No alarms<svg class="pl"><use href="#plus"/></svg></span><span>us-east-1a</span><span>–</span><span>–</span><span>–</span><span>–</span>
          </div>
        </div>
        <div class="hs"><i class="hs-l"></i><span class="hs-thumb"></span><i class="hs-r"></i></div>
        <div class="ec2-gap"></div>
        <div class="ec2-detail">
          <span class="ec2-handle"></span>
          <div class="det-head"><h2>Select an instance</h2><svg class="ic20 det-gear" viewBox="0 0 24 24"><use href="#gearo"/></svg></div>
        </div>
      </div>
    </div>
    <div class="aws-foot"></div>
  </section>
</main>
</body>
</html>
```
FILE: styles.css
```css
*{box-sizing:border-box}
html,body{margin:0;height:100%;overflow:hidden;background:#efefef}
.sprite{display:none}
svg{display:block;flex:none}
.ic8{width:8px;height:8px}.ic12{width:12px;height:12px}.ic14{width:14px;height:14px}.ic16{width:16px;height:16px}
.ic18{width:18px;height:18px}.ic20{width:20px;height:20px}.ic24{width:24px;height:24px}
.desktop{position:relative;width:3632px;height:1002px;overflow:hidden;font-family:"Open Sans",sans-serif}

/* Word */
.word{position:absolute;left:1516px;top:0;width:199px;height:1002px;background:#efefef;display:flex;flex-direction:column}
.word-title{display:flex;height:43px;padding-left:8px}
.word-cell{width:47.750px;display:flex;align-items:center;justify-content:center}
.word-cell-on{background:#fff}
.word-actions{display:flex;margin-top:3px;height:24px;gap:8px}
.word-sliver{width:6px;border:1px solid #8a8a8a;border-left:0;border-radius:0 4px 4px 0;background:#fff}
.word-edit{width:85px;border:1px solid #8a8a8a;border-radius:4px;background:#fff;display:flex;align-items:center;gap:3px;padding-left:4px;font-size:13.500px;color:#333}
.word-edit .ic8{margin-left:3px}
.word-share{width:80px;background:#185abd;border-radius:4px;color:#fff;display:flex;align-items:center;gap:5px;padding-left:8px;font-size:13.500px}
.word-share-chev{margin-left:5px}
.ribbon{margin-top:3px;width:191px;height:100px;background:#fff;border-radius:0 8px 8px 0;box-shadow:0 2px 5px rgba(0,0,0,.18);display:flex;padding:5px 0 6px}
.rib-col{display:flex;flex-direction:column;border-right:1px solid #cfcfcf;font-size:12px;color:#333}
.rib-col-a{width:26px;padding-top:4px}
.rib-blue{width:12px;height:24px}
.rib-or{margin-top:8px;font-size:12px;line-height:16px}
.rib-col-b{width:62px;align-items:center;padding-top:4px}
.rib-addin{width:28px;height:28px}
.rib-label{margin-top:4px;line-height:16px}
.rib-group{margin-top:auto;line-height:14px;margin-bottom:-4px}
.rib-end{flex:1;display:flex;align-items:flex-end;justify-content:flex-end;padding:0 9px 2px 0}

/* small window behind the JMeter one */
.subwin{position:absolute;left:1400px;top:131px;width:146px;height:632px;background:#fff;border-radius:8px;box-shadow:0 6px 30px rgba(0,0,0,.28);display:flex;flex-direction:column;overflow:hidden}
.subwin-title{height:39px;background:#e7e7e7;display:flex;justify-content:flex-end;align-items:center;padding:0 17px 0 0;flex:none}
.subwin-body{height:54px;flex:none;background:linear-gradient(90deg,#f4f4f4,#fff)}
.subwin-grid{height:100px;flex:none;border-top:1px solid #d9d9d9;padding:0}
.subwin-tick{margin-top:auto;margin-bottom:1px;align-self:flex-end;margin-right:4px;width:22px;height:22px;background:#cfe4f1;border:1px solid #2aa0dc;display:flex;align-items:center;justify-content:center}

/* JMeter */
.jmeter{position:absolute;left:0;top:0;width:1516px;height:1002px;background:#3c3f41;color:#bbb;display:flex;flex-direction:column;box-shadow:0 0 34px rgba(0,0,0,.33);overflow:hidden;font-size:11.200px}
.jm-title{height:26px;background:#f2f2f2;display:flex;align-items:center;flex:none;color:#6f6f6f;font-size:11.400px}
.jm-feather{width:10px;height:18px;margin-left:6px}
.jm-title-text{margin-left:10px}
.jm-win{margin-left:auto;display:flex;gap:34px;padding-right:17px}
.jm-menu{height:22px;border-bottom:1px solid #555759;display:flex;align-items:center;flex:none;font-size:11.200px;gap:14px;padding-left:1px}
.jm-tools{height:36px;border-bottom:1px solid #4f5254;display:flex;align-items:center;flex:none;margin-left:-1px}
.tb{width:28px;height:22px;padding:0 2px}
.tb-stop{height:24px}
.tb-sep{width:1px;height:28px;background:#57595b;margin:0 1.500px}
.tb-stop-t{font:700 7px "Liberation Sans",sans-serif;fill:#f1d5d5;text-anchor:middle}
.tb-q{font:700 16px "Liberation Sans",sans-serif;fill:#fff;text-anchor:middle}
.jm-stat{margin-left:auto;display:flex;align-items:center;padding-right:4px;gap:6px;font-size:11.200px}
.jm-stat>span:first-child{margin-right:2px}
.tb-warn{width:22px;height:20px;margin-right:1px}
.jm-red{color:#d8232a}
.jm-orb{width:20px;height:20px;border-radius:50%;background:radial-gradient(circle at 50% 50%,#0d6b0d 0 22%,#34c518 60%,#0a8a0a);margin-left:1px}
.jm-body{flex:1;display:flex;min-height:0}
.jm-tree{width:372px;flex:none;border-right:1px solid #4d5052;background:linear-gradient(90deg,transparent 2px,#4d5052 2px 3px,transparent 3px 23px,#4d5052 23px 24px,transparent 24px) 0 20px/100% 99px no-repeat;font-size:11.200px}
.tr{height:20px;display:flex;align-items:center;white-space:nowrap}
.tw{width:10px;height:10px;margin-right:6px}
.ti{width:16px;height:18px;margin-right:5px}
.ti-w{width:18px;margin-right:3px;margin-left:-1px}
.tr-0{padding-left:0}
.tr-0 .ti{margin-left:2px;margin-right:6px;width:13px}
.tr-1{padding-left:20px}
.tr-1 .tw{margin-right:7px}
.tr-2{padding-left:57px}
.tr-on{background:#0d293e;color:#bbb;margin-right:0}
.jm-panel{flex:1;min-width:0;margin-left:8px;border-left:1px solid #4d5052;display:flex;flex-direction:column}
.jm-form{padding:12px 11px 0 9px;flex:none}
.jm-h{margin:0;font-size:14.800px;font-weight:400;line-height:20px}
.jm-field{display:flex;margin-top:6px;height:23px;align-items:stretch;font-size:11.400px}
.jm-field-c{margin-top:8px}
.jm-lab{width:69px;display:flex;align-items:center}
.jm-input{flex:1;background:#45494a;border:1px solid #646464;display:flex;align-items:center;padding-left:3px}
.jm-legend{margin-top:8px;height:14px;display:flex;align-items:center;font-size:11.400px;gap:0;padding-left:2px}
.jm-legend::before{content:"";width:5px;height:1px;background:#5b5e60;margin-right:1px}
.jm-legend::after{content:"";flex:1;height:1px;background:#5b5e60;margin-left:1px}
.jm-file{margin-top:4px;height:23px;display:flex;align-items:center;padding-left:4px;font-size:11.400px}
.jm-flab{width:55px}
.jm-input-f{flex:none;width:642px;height:23px}
.jm-btn{border:1px solid #5e6060;border-radius:2px;background:#3f4345;display:flex;align-items:center;justify-content:center;height:23px}
.jm-btn-s{width:65px;margin-left:10px;font-size:9.800px}
.jm-ld{margin-left:7px;width:105px;white-space:nowrap}
.jm-chk{width:14px;height:14px;flex:none;border:1px solid #646464;border-radius:2px;background:#43474a}
.jm-cl{margin-left:6px;margin-right:11px;font-size:11px;white-space:nowrap}
.jm-btn-c{width:81px;margin-left:-4px;height:24px}
.jt-head{margin-top:22px;margin-left:0;height:26px;flex:none;background:#45494a;border:1px solid #393c3e;display:grid;grid-template-columns:repeat(9,112px) 1fr;align-items:center;text-align:center;font-size:11.500px;color:#bbb;margin-right:1px}
.jt-head span{height:100%;display:flex;align-items:center;justify-content:center;border-right:1px solid #393c3e;white-space:nowrap;overflow:hidden}
.jt-wrap{flex:none;height:704px;margin-top:2px;padding-left:2px;display:flex;overflow:hidden}
.jt-rows{width:1118px;flex:none}
.jr{height:20px;display:grid;grid-template-columns:repeat(10,111.800px);align-items:center;border-bottom:1px solid #505354;background-image:linear-gradient(90deg,transparent calc(100% - 1px),#505354 0);background-size:111.800px 100%;font-size:11.200px;line-height:19px;overflow:hidden}
.jr b{font-weight:400;text-align:right;padding-right:5px;white-space:nowrap}
.jr em{font-style:normal;padding-left:5px;white-space:nowrap}
.jr s{text-decoration:none;display:flex;justify-content:center}
.jr .c8{grid-column:8}
.jr .c6{grid-column:6}
.sh{width:14px;height:16px}
.jt-scroll{width:8px;height:652px;margin-left:4px;background:#58595c;flex:none}
.jm-foot{margin-top:2px;border-top:1px solid #4f5254;flex:none;display:flex;align-items:center;padding:9px 0 0 5px;font-size:11.200px;height:50px}
.jm-foot .jm-chk{align-self:flex-start;margin-top:6px}
.jf-a{margin-left:6px;width:120px}.jf-b{margin-left:6px;width:228px}.jf-c{width:192px}.jf-d{width:158px}
.jf-c b,.jf-d b{font-weight:400;margin-left:16px;color:#111}
.jf-e{width:124px;color:#00f}.jf-f{color:#f00}
.jf-e b,.jf-f b{font-weight:400;margin-left:18px}

/* Clock */
.clock{position:absolute;left:473px;top:233px;width:727px;height:500px;border-radius:8px;overflow:hidden;box-shadow:0 10px 34px rgba(0,0,0,.42);display:flex;background:#fbfbfb;color:#1b1b1b}
.ck-side{width:49px;flex:none;background:#f3f3f3;border-right:1px solid #e8e8e8;display:flex;flex-direction:column;align-items:center;padding-bottom:14px}
.ck-nav{height:40px;width:39px;display:flex;align-items:center;justify-content:center;position:relative}
.ck-nav-first{height:36px}
.ck-nav-on{background:linear-gradient(#ececec,#ececec) 0 2px/100% 36px no-repeat}
.ck-nav-on::before{content:"";position:absolute;left:0;top:12px;width:3px;height:16px;background:#0067c0;border-radius:2px}
.ck-user{margin-top:auto;width:24px;height:24px;border-radius:50%;background:#dcdcdc;display:flex;align-items:center;justify-content:center;font-size:9.500px;color:#333}
.ck-gear{margin-top:20px;color:#444}
.ck-main{flex:1;min-width:0;display:flex;flex-direction:column}
.ck-title{height:36px;display:flex;align-items:center;padding-left:8px;flex:none}
.ck-logo{width:15px;height:18px}
.ck-name{margin-left:14px;font-size:12px}
.ck-win{margin-left:auto;display:flex;margin-top:-4px}
.ck-win span{width:46px;display:flex;justify-content:center}
.ck-expand{margin-top:67px;height:20px;display:flex;justify-content:flex-end;padding-right:89px;gap:20px;flex:none}
.ck-time{margin-top:-8px;padding-left:78px;font:300 110px/110px Roboto,sans-serif;letter-spacing:-1.500px;white-space:nowrap;flex:none;height:110px;color:#1b1b1b}
.ck-frac{font-size:78px;letter-spacing:0;margin-left:8px}
.ck-units{display:grid;grid-template-columns:repeat(3,145px);padding-left:65px;height:28px;line-height:28px;font-size:20px;text-align:center;flex:none}
.ck-btns{display:flex;align-items:center;margin-top:39px;margin-left:213px;gap:26px;flex:none}
.ck-pause{width:67px;height:67px;border-radius:50%;background:#0067c0;display:flex;align-items:center;justify-content:center;gap:5px}
.ck-pause i{width:8px;height:22px;background:#fff;border-radius:2px}
.ck-round{width:65px;height:65px;border-radius:50%;background:#fff;border:1px solid #efefef;border-bottom:2px solid #dcdcdc;display:flex;align-items:center;justify-content:center}

/* Browser */
.browser{position:absolute;left:1715px;top:0;width:1917px;height:1002px;background:#fff;display:flex;flex-direction:column;font-family:Roboto,sans-serif}
.ch-tabs{height:29px;background:#dee1e6;display:flex;padding-left:10px;flex:none;align-items:stretch}
.tab{width:234.700px;display:flex;align-items:center;padding:0 9px 0 10px;font:11.200px "Open Sans",sans-serif;color:#45494e;position:relative;gap:8px;flex:none}
.tab::after{content:"";position:absolute;right:0;top:6px;bottom:7px;width:1px;background:#8c8f94}
.tab-on{background:#fff;border-radius:8px 8px 0 0;color:#3c4043}
.tab-on::after{display:none}
.fav{width:16px;height:16px}
.tab-t{flex:1;min-width:0;white-space:nowrap;overflow:hidden;-webkit-mask-image:linear-gradient(90deg,#000 85%,transparent)}
.tab-x{width:14px;text-align:center;font-size:15px;font-weight:600;line-height:14px;color:#444}
.tab-new{width:46px;display:flex;align-items:center;justify-content:center}
.ch-win{margin-left:auto;display:flex;align-items:center;gap:34px;padding:0 14px 6px 0}
.ch-bar{height:41px;flex:none;display:flex;align-items:center;padding-left:12px;gap:12px}
.ch-omni{margin-left:0;width:1521px;height:34px;border-radius:17px;background:#f1f3f4;display:flex;align-items:center;padding:0 10px 0 12px;gap:6px;flex:none}
.ch-url{font-size:13.700px;color:#3c4043;white-space:nowrap;letter-spacing:-.01px}
.ch-omni-r{margin-left:auto;display:flex;gap:14px}
.ch-exts{display:flex;align-items:center;gap:14px;margin-left:1px}
.ch-avatar{width:22px;height:28px;border-radius:50%;background:linear-gradient(#6db3e8 0 45%,#2d4a58 45% 70%,#6c5d4c 70%)}
.ch-update{width:79px;height:28px;margin-left:-10px;border:1px solid #d93025;border-radius:14px;color:#d93025;font:12.400px "Open Sans",sans-serif;display:flex;align-items:center;padding-left:11px;background:#fef7f6}
.ch-dots{width:4px;height:14px;margin-left:auto;margin-right:9px;fill:#d93025}
.ch-book{height:33px;flex:none;display:flex;align-items:center;padding-left:16px;gap:17px;font:11.200px "Open Sans",sans-serif;color:#3c4043;white-space:nowrap;padding-bottom:1px}
.bk{display:flex;align-items:center;gap:8px}
.bk-f{width:13px;height:20px}
.bk-i{width:16px;height:20px;margin-left:-4px}
.aws-nav{height:41px;flex:none;background:#232f3e;border-top:1px solid #3f4a58;border-bottom:2px solid #414d5c;display:flex;align-items:center;color:#fff;padding-left:19px}
.aws-logo{width:30px;font:500 19px/17px Roboto,sans-serif;letter-spacing:-.3px;margin-top:-6px}
.aws-smile{width:30px;height:8px;margin-top:-2px}
.aws-grid{width:15px;height:15px;margin-left:36px}
.aws-services{margin-left:9px;font-size:13.700px;font-weight:500;width:50px;white-space:nowrap;letter-spacing:-.2px}
.aws-search{margin-left:11px;width:540px;height:29px;background:#161e2d;border:1px solid #687078;display:flex;align-items:center;padding:0 10px 0 11px;color:#aab7b8;font-size:14px}
.aws-ph{font-style:italic;margin-left:8px;font-family:"Open Sans",sans-serif;font-size:13px}
.aws-key{margin-left:auto}
.aws-right{margin-left:auto;display:flex;align-items:center;height:28px;padding-right:15px;font-size:12.400px}
.aws-ic{width:50px;height:100%;display:flex;align-items:center;justify-content:center;border-right:1px solid #414d5c}
.aws-wh{color:#fff}
.aws-reg{width:106px;height:100%;display:flex;align-items:center;padding-left:17px;gap:6px;border-right:1px solid #414d5c;white-space:nowrap}
.aws-user{display:flex;align-items:center;padding-left:18px;gap:6px;white-space:nowrap}
.tri{display:inline-block;width:0;height:0;border:4.500px solid transparent;border-top:8px solid currentColor;border-bottom:0}
.aws-body{flex:1;min-height:0;display:flex}
.ec2-side{width:240px;flex:none;display:flex;background:#fff;border-right:1px solid #d5dbdb;overflow:hidden}
.ec2-links{width:224px;flex:none;padding-top:17px;color:#545b64;font-size:14px}
.sn{display:flex;align-items:center;justify-content:space-between;height:30px;padding:0 22px 0 32px;white-space:nowrap;font-size:14px}
.sn-on{color:#0073bb;font-weight:500}
.sh-h{height:31px;margin-top:12px;display:flex;align-items:center;font-weight:500;padding-left:14px;color:#444c55;white-space:nowrap}
.sh-h-img{margin-top:18px}
.tri-d{margin-right:5px;color:#444c55}
.sn-new{display:block;height:16px;margin-left:40px;width:25px;line-height:15px;font-size:12.500px;font-weight:500;color:#0073bb;border-bottom:1px dashed #0073bb}
.ec2-vs{width:15px;flex:none;background:#f1f1f1;display:flex;flex-direction:column;align-items:center;margin-left:1px;padding-top:6px}
.vs-up{width:0;height:0;border:4px solid transparent;border-bottom:5px solid #a3a3a3;border-top:0}
.vs-thumb{width:14px;height:660px;background:#c1c1c1;margin-top:6px}
.vs-down{width:0;height:0;border:4px solid transparent;border-top:5px solid #505050;border-bottom:0;margin-top:auto;margin-bottom:6px}
.ec2-main{flex:1;min-width:0;background:#fafafa;display:flex;flex-direction:column;overflow:hidden;color:#545b64}
.ec2-top{display:flex;align-items:center;justify-content:space-between;padding:11px 17px 0 20px;height:39px;flex:none}
.ec2-h{margin:0;font-size:18px;font-weight:500;color:#16191f;line-height:28px;white-space:nowrap}
.ec2-count{font-weight:300;color:#687078}
.ec2-info{font-size:13.500px;color:#0073bb;margin-left:3px}
.ec2-actions{display:flex;gap:8px;height:28px;font-size:15px;font-weight:500}
.ab{border:1px solid #545b64;background:#fff;border-radius:2px;display:flex;align-items:center;justify-content:center;color:#545b64;white-space:nowrap;gap:10px;height:28px}
.ab-r{width:50px}
.ab-off{width:98px;border-color:#d5dbdb;color:#aab7b8}
.ab-is{width:156px}
.ab-ac{width:113px}
.ab-launch{width:154px;background:#ff9900;color:#16191f;border-radius:2px 0 0 2px;display:flex;align-items:center;justify-content:center;white-space:nowrap}
.ab-drop{width:30px;margin-left:-6px;background:#ff9900;color:#16191f;border-radius:0 2px 2px 0;display:flex;align-items:center;justify-content:center}
.ec2-find{display:flex;align-items:center;margin-top:6px;padding:0 17px 0 20px;height:28px;flex:none;justify-content:space-between}
.find-box{width:648px;height:28px;background:#fff;border:1px solid #545b64;border-radius:2px;display:flex;align-items:center;gap:8px;padding:0 8px;font-size:14px;font-style:italic;color:#687078}
.pager{display:flex;align-items:center;color:#16191f;font-size:14px;margin-right:3px}
.pg{width:10px;height:18px}
.pg-n{width:48px;text-align:center}
.pg-sep{width:1px;height:28px;background:#d5dbdb;margin:0 11px 0 14px}
.pg-gear{color:#545b64}
.it-clip{margin-top:10px;overflow:hidden;border-top:1px solid #eaeded;flex:none;height:301px}
.it-row{display:grid;grid-template-columns:54px 139px 200px 160px 150px 150px 130px 170px 200px 150px 150px 100px;width:1703px;height:33.500px;align-items:center;background:#fff;border-bottom:1px solid #eaeded;font-size:14px;color:#545b64;padding-top:1px}
.it-row>*{padding-left:17px;white-space:nowrap;overflow:hidden;display:flex;align-items:center;min-width:0}
.it-row>:first-child{padding-left:20px}
.it-row a{color:#0073bb;font-size:14.500px;letter-spacing:.03px}
.it-head{height:32px;background:#fafafa;font-weight:500;color:#545b64;font-size:14.600px;letter-spacing:-.1px;padding-top:0}
.it-head>*{border-right:1px solid #aab7b8;height:20px;position:relative}
.it-head>:first-child{border-right:0}
.cb{display:block;width:14px;height:14px;border:1px solid #545b64;border-radius:2px;background:#fff}
.flt{width:12px;height:14px;margin-left:auto;margin-right:13px}
.it-head .ic14{margin-left:4px}
.state em{font-style:normal;color:#687078}
.st{width:16px;height:16px;margin-right:4px}
.zi{width:16px;height:16px;flex:none}
.zi-s{margin-left:11px}.zo-s{margin-left:13px;flex:none}
.zi-p{margin-left:10px}.zo-p{margin-left:9px}
.zi-t{margin-left:5px}.zo-t{margin-left:8px}
.state{padding-right:0}
.pl{width:16px;height:16px;margin-left:14px}
.hs{height:19px;background:#f1f1f1;display:flex;align-items:center;padding:0 1px 0 6px;border-bottom:2px solid #879596;flex:none}
.hs-l{border:4px solid transparent;border-right:5px solid #a3a3a3;border-left:0}
.hs-thumb{width:1020px;height:13px;background:#c1c1c1;margin-left:7px}
.hs-r{margin-left:auto;border:4px solid transparent;border-left:5px solid #505050;border-right:0}
.ec2-gap{height:133px;background:#f2f3f3;flex:none}
.ec2-detail{flex:1;background:#fff;border-top:1px solid #d5dbdb;display:flex;flex-direction:column;align-items:stretch}
.ec2-handle{width:14px;height:5px;margin:6px auto 0;border-top:1px solid #545b64;border-bottom:1px solid #545b64;margin-left:840px}
.det-head{display:flex;justify-content:space-between;align-items:center;padding:3px 58px 0 21px}
.det-head h2{margin:0;font-size:17.500px;font-weight:500;color:#16191f;line-height:30px}
.det-gear{color:#545b64}
.aws-foot{height:6px;background:#232f3e;flex:none}
```
